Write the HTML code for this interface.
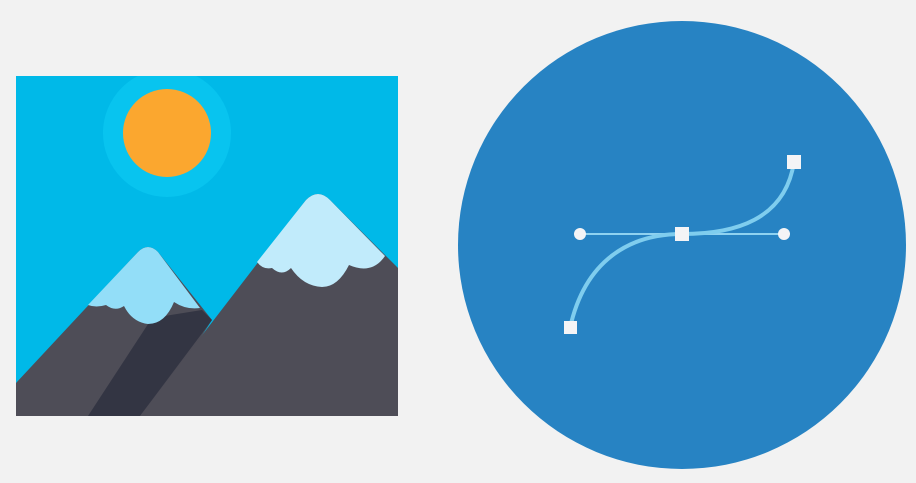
<!DOCTYPE html>
<html><head><style>html,body{margin:0;padding:0;background:#f2f2f2;}</style></head>
<body>
<svg width="916" height="483" viewBox="0 0 916 483" xmlns="http://www.w3.org/2000/svg" style="display:block">
<defs><clipPath id="c"><rect x="16" y="76" width="382" height="340"/></clipPath></defs>
<rect width="916" height="483" fill="#f2f2f2"/>
<g clip-path="url(#c)">
<rect x="16" y="76" width="382" height="340" fill="#00b9e8"/>
<circle cx="167" cy="133" r="64" fill="#08c4ef"/>
<circle cx="167" cy="133" r="44" fill="#fba72f"/>
<path d="M16,383 L138,252 Q148,242 158,252 L212,320 L150,416 L16,416 Z" fill="#4e4d57"/>
<path d="M152,318 L202,310 L212,320 L140,416 L88,416 Z" fill="#333543"/>
<path d="M88,305 L138,252 Q148,242 158,252 L200,308 Q186,310 174,302 Q165,324 148,324 Q132,322 124,306 Q115,312 106,305 Q96,308 88,305 Z" fill="#93def8"/>
<path d="M140,416 L306,200 Q318,188 330,200 L398,268 L398,416 Z" fill="#4e4d57"/>
<path d="M257,262 L306,200 Q318,188 330,200 L385,256 Q372,275 349,265 Q338,287 322,287 Q303,286 291,268 Q282,277 272,268 Q263,270 257,262 Z" fill="#c1ebfb"/>
</g>
<circle cx="682" cy="245" r="224" fill="#2783c3"/>
<line x1="580" y1="234" x2="784" y2="234" stroke="#8fd2f0" stroke-width="2"/>
<path d="M570,328 C585,260 630,234 682,234 C735,234 785,220 794,162" fill="none" stroke="#7fcdee" stroke-width="4"/>
<circle cx="580" cy="234" r="6" fill="#f4f4f6"/>
<circle cx="784" cy="234" r="6" fill="#f4f4f6"/>
<rect x="564" y="321" width="13" height="13" fill="#f4f4f6"/>
<rect x="675" y="227" width="14" height="14" fill="#f4f4f6"/>
<rect x="787" y="155" width="14" height="14" fill="#f4f4f6"/>
</svg>
</body></html>
